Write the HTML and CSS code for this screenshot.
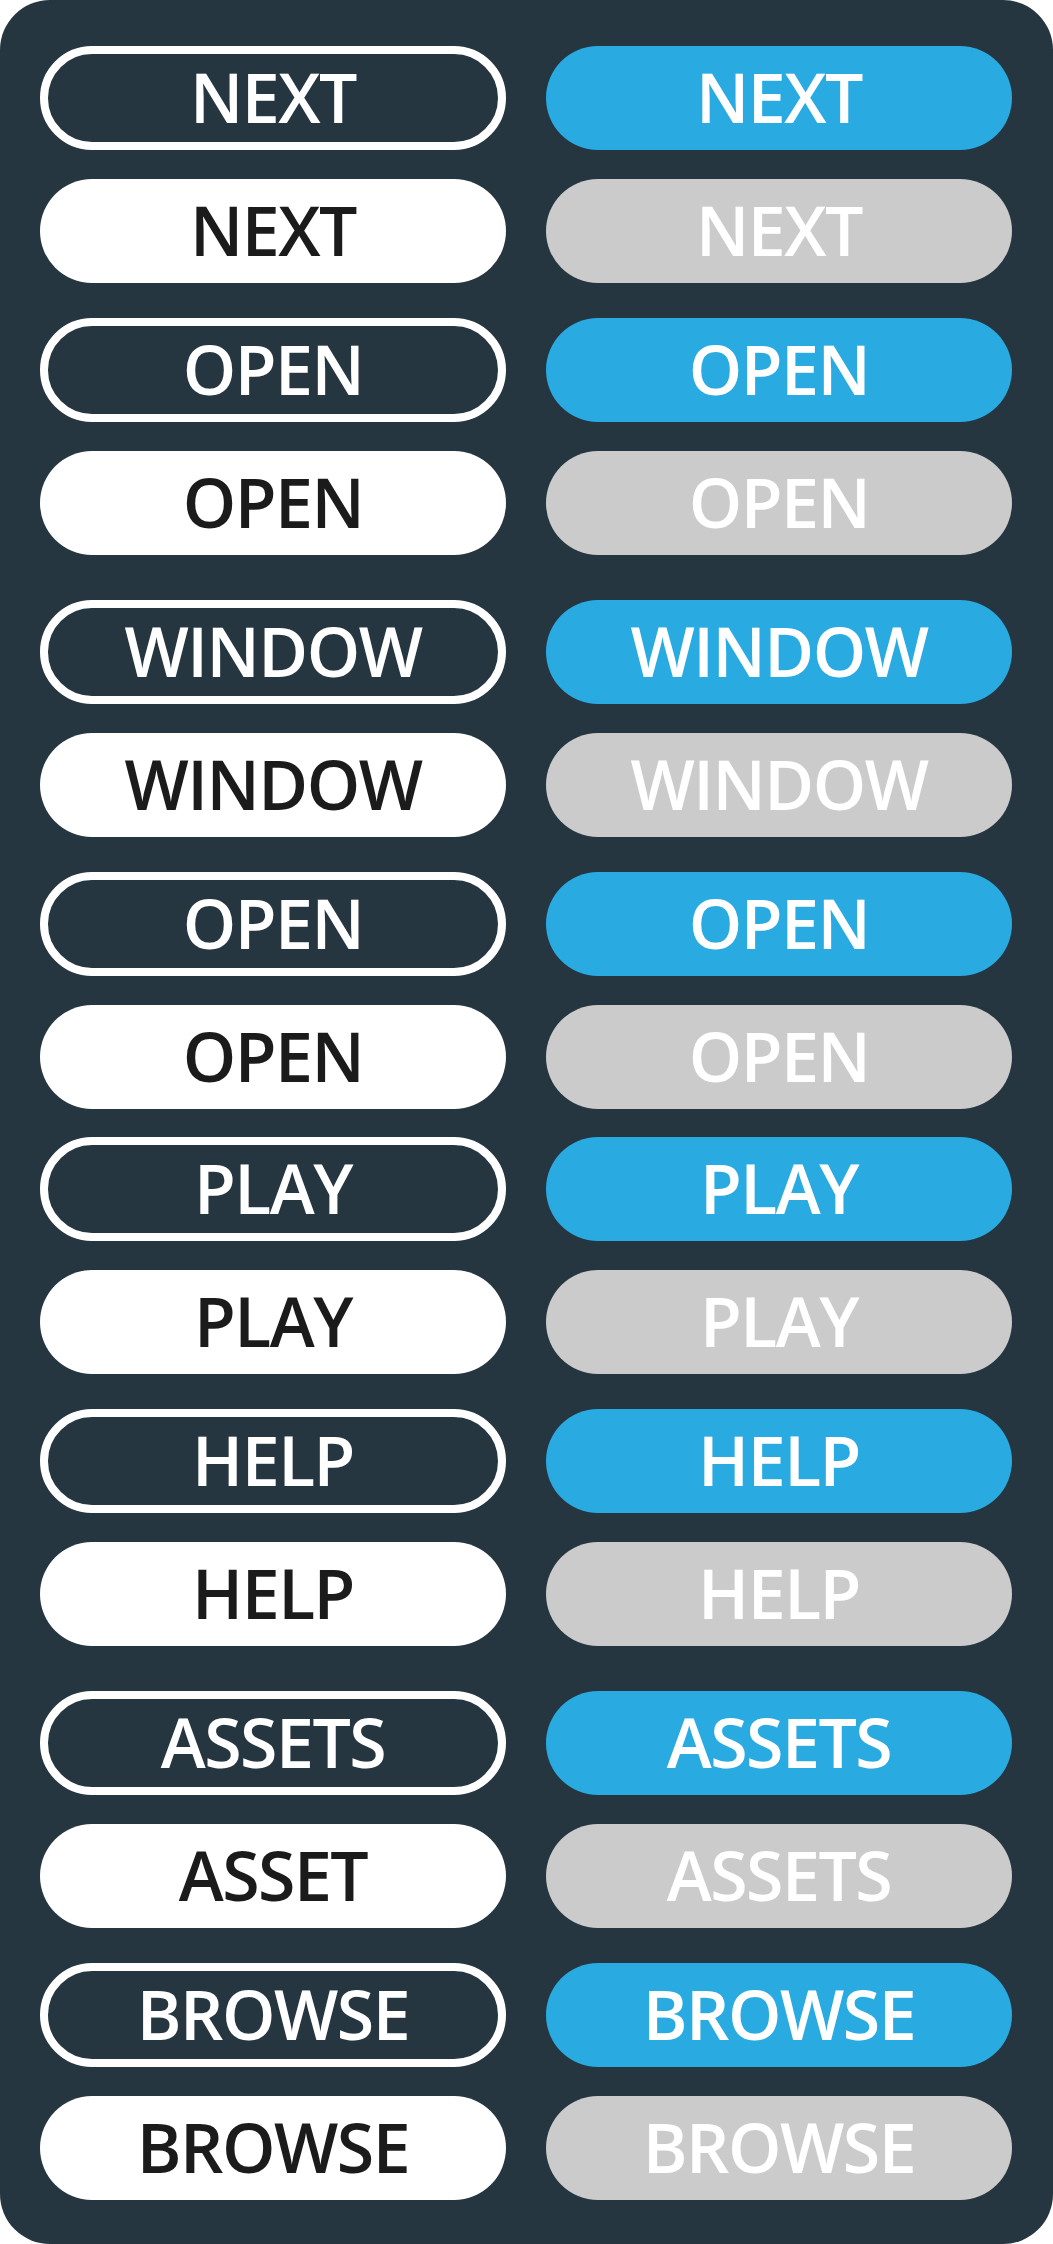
FILE: index.html
```html
<!DOCTYPE html>
<html lang="en">
<head>
<meta charset="utf-8">
<title>Buttons</title>
<link rel="stylesheet" href="styles.css">
</head>
<body>
<div class="panel">
  <div class="pair">
    <div class="btn outline">NEXT</div><div class="btn blue">NEXT</div>
    <div class="btn white">NEXT</div><div class="btn gray">NEXT</div>
  </div>
  <div class="pair">
    <div class="btn outline">OPEN</div><div class="btn blue">OPEN</div>
    <div class="btn white">OPEN</div><div class="btn gray">OPEN</div>
  </div>
  <div class="pair wide">
    <div class="btn outline">WINDOW</div><div class="btn blue">WINDOW</div>
    <div class="btn white">WINDOW</div><div class="btn gray">WINDOW</div>
  </div>
  <div class="pair">
    <div class="btn outline">OPEN</div><div class="btn blue">OPEN</div>
    <div class="btn white">OPEN</div><div class="btn gray">OPEN</div>
  </div>
  <div class="pair tight">
    <div class="btn outline">PLAY</div><div class="btn blue">PLAY</div>
    <div class="btn white">PLAY</div><div class="btn gray">PLAY</div>
  </div>
  <div class="pair">
    <div class="btn outline">HELP</div><div class="btn blue">HELP</div>
    <div class="btn white">HELP</div><div class="btn gray">HELP</div>
  </div>
  <div class="pair wide">
    <div class="btn outline">ASSETS</div><div class="btn blue">ASSETS</div>
    <div class="btn white">ASSET</div><div class="btn gray">ASSETS</div>
  </div>
  <div class="pair">
    <div class="btn outline">BROWSE</div><div class="btn blue">BROWSE</div>
    <div class="btn white">BROWSE</div><div class="btn gray">BROWSE</div>
  </div>
</div>
</body>
</html>
```
FILE: styles.css
```css
html, body {
  margin: 0;
  padding: 0;
  background: #ffffff;
}
.panel {
  width: 1053px;
  height: 2244px;
  box-sizing: border-box;
  background: #253640;
  border-radius: 50px;
  padding: 46px 40px 45px 40px;
  display: flex;
  flex-direction: column;
}
.pair {
  display: grid;
  grid-template-columns: 466px 466px;
  grid-auto-rows: 104px;
  column-gap: 40px;
  row-gap: 29px;
  margin-top: 35px;
}
.pair:first-child { margin-top: 0; }
.pair.wide { margin-top: 45px; }
.pair.tight { margin-top: 28px; }
.btn {
  box-sizing: border-box;
  border-radius: 52px;
  display: flex;
  align-items: center;
  justify-content: center;
  font-family: "Open Sans", "Noto Sans", sans-serif;
  font-weight: 600;
  font-size: 68px;
  letter-spacing: -1.5px;
  line-height: 1;
  padding-bottom: 2px;
}
.outline {
  border: 8px solid #ffffff;
  color: #ffffff;
}
.blue {
  background: #29aae1;
  color: #ffffff;
}
.white {
  background: #ffffff;
  color: #1b1b1b;
}
.gray {
  background: #cbcbcb;
  color: #ffffff;
}
```
